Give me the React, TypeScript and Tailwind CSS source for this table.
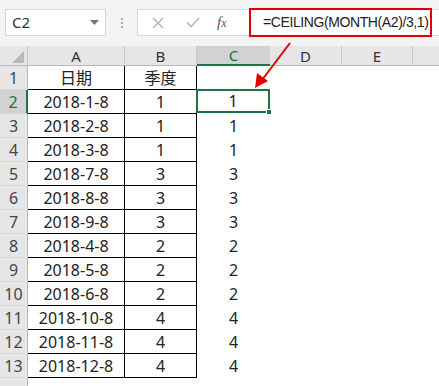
import React from "react";

const rows: [string, string, string][] = [
  ["2018-1-8", "1", "1"],
  ["2018-2-8", "1", "1"],
  ["2018-3-8", "1", "1"],
  ["2018-7-8", "3", "3"],
  ["2018-8-8", "3", "3"],
  ["2018-9-8", "3", "3"],
  ["2018-4-8", "2", "2"],
  ["2018-5-8", "2", "2"],
  ["2018-6-8", "2", "2"],
  ["2018-10-8", "4", "4"],
  ["2018-11-8", "4", "4"],
  ["2018-12-8", "4", "4"],
];

const font = { fontFamily: '"Noto Sans", "Noto Sans CJK SC", sans-serif' };

function RowHead({ n, active }: { n: number; active?: boolean }) {
  return (
    <div
      className={
        "h-[24px] flex items-end justify-center pb-[1px] text-[16px] leading-[20px] border-b border-[#d4d4d4] " +
        (active
          ? "bg-[#d2d2d2] text-[#217346] border-r-2 border-r-[#217346]"
          : "bg-[#e6e6e6] text-[#444] border-r border-r-[#b8b8b8]")
      }
    >
      {n}
    </div>
  );
}

export default function App() {
  return (
    <div
      className="w-[439px] h-[386px] bg-[#f3f3f3] overflow-hidden relative text-[#222]"
      style={font}
    >
      {/* formula bar */}
      <div className="h-[46px] flex items-start pt-[9px]">
        <div className="ml-[5px] w-[101px] h-[27px] bg-white border border-[#d6d6d6] flex items-center justify-between pl-[6px] pr-[6px]">
          <span className="text-[15px] text-[#333]">C2</span>
          <svg width="9" height="6" viewBox="0 0 9 6">
            <path d="M0 0 H9 L4.5 5 Z" fill="#777" />
          </svg>
        </div>
        <div className="w-[31px] h-[27px] flex flex-col items-center justify-center gap-[2px]">
          <span className="w-[2px] h-[2px] bg-[#aaa]" />
          <span className="w-[2px] h-[2px] bg-[#aaa]" />
          <span className="w-[2px] h-[2px] bg-[#aaa]" />
        </div>
        <div className="flex-1 h-[27px] bg-white border border-[#d6d6d6] border-r-0 flex items-center">
          <div className="w-[111px] flex items-center">
            <svg className="ml-[14px]" width="12" height="12" viewBox="0 0 12 12">
              <path d="M1 1 L11 11 M11 1 L1 11" stroke="#b5b5b5" strokeWidth="1.5" />
            </svg>
            <svg className="ml-[22px]" width="14" height="11" viewBox="0 0 14 11">
              <path d="M1 5.5 L5 9.5 L13 1" stroke="#b5b5b5" strokeWidth="1.6" fill="none" />
            </svg>
            <span
              className="ml-[17px] text-[15px] italic text-[#555]"
              style={{ fontFamily: '"Liberation Serif", serif' }}
            >
              f<span className="text-[12px]">x</span>
            </span>
          </div>
          <div
            className="h-[29px] w-[183px] border-2 border-[#e00000] flex items-center pl-[12px] text-[14px] tracking-[-0.4px] text-[#222] mt-[-1px] whitespace-nowrap"
            style={{ fontFamily: '"Liberation Sans", Arial, sans-serif' }}
          >
            =CEILING(MONTH(A2)/3,1)
          </div>
        </div>
      </div>

      {/* column headers */}
      <div className="grid grid-cols-[28px_97px_72px_73px_72px_71px_26px] h-[20px] bg-[#e6e6e6] text-[15px] leading-[18px] text-[#333] border-b border-[#b8b8b8]">
        <div className="relative border-r border-[#c8c8c8]">
          <svg className="absolute right-[3px] bottom-[2px]" width="12" height="12" viewBox="0 0 12 12">
            <path d="M12 0 V12 H0 Z" fill="#b9b9b9" />
          </svg>
        </div>
        <div className="flex items-end justify-center border-r border-[#c8c8c8]">A</div>
        <div className="flex items-end justify-center border-r border-[#c8c8c8]">B</div>
        <div className="flex items-end justify-center bg-[#d2d2d2] text-[#217346] border-b-2 border-[#217346] mb-[-1px]">C</div>
        <div className="flex items-end justify-center border-r border-[#c8c8c8]">D</div>
        <div className="flex items-end justify-center border-r border-[#c8c8c8]">E</div>
        <div />
      </div>

      {/* body */}
      <div className="grid grid-cols-[28px_97px_72px_73px_72px_71px_26px] text-[16px] leading-[20px] bg-white">
        <RowHead n={1} />
        <div className="h-[24px] flex items-center justify-center border-r border-b border-black">日期</div>
        <div className="h-[24px] flex items-center justify-center border-r border-b border-black">季度</div>
        <div className="h-[24px]" />
        <div />
        <div />
        <div />
        {rows.map((r, i) => (
          <React.Fragment key={i}>
            <RowHead n={i + 2} active={i === 0} />
            <div className="h-[24px] flex items-center justify-center border-r border-b border-black">{r[0]}</div>
            <div className="h-[24px] flex items-center justify-center border-r border-b border-black">{r[1]}</div>
            {i === 0 ? (
              <div className="h-[24px] relative flex items-center justify-center border-2 border-[#217346] ml-[-1px] mt-[-1px]">
                {r[2]}
                <span className="absolute right-[-4px] bottom-[-4px] w-[6px] h-[6px] bg-[#217346] border border-white" />
              </div>
            ) : (
              <div className="h-[24px] flex items-center justify-center">{r[2]}</div>
            )}
            <div />
            <div />
            <div />
          </React.Fragment>
        ))}
        <div className="h-[24px] bg-[#e6e6e6] border-r border-[#b8b8b8]" />
        <div />
        <div />
        <div />
        <div />
        <div />
        <div />
      </div>

      {/* arrow overlay */}
      <svg className="absolute left-0 top-0 pointer-events-none" width="439" height="386">
        <line x1="290" y1="43" x2="262" y2="80" stroke="#e00000" strokeWidth="2" />
        <path d="M255 88 L257 73 L268 81 Z" fill="#e00000" />
      </svg>
    </div>
  );
}
